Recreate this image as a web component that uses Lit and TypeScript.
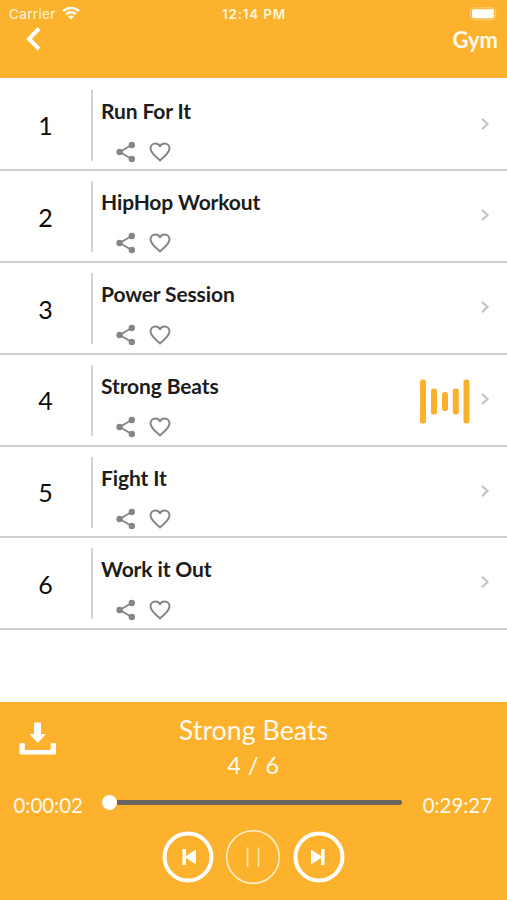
import { LitElement, html, css, svg } from "lit";
import { customElement, property, state } from "lit/decorators.js";

@customElement("track-row")
class TrackRow extends LitElement {
  @property({ type: Number }) number = 1;
  @property() name = "";
  @property({ type: Boolean }) playing = false;

  static styles = css`
    :host { display: flex; box-sizing: border-box; height: 91.7px; border-bottom: 2px solid #cfcfcf; padding-top: 10px; color: #1c1c1c; }
    .number { width: 91px; height: 71px; box-sizing: border-box; display: flex; align-items: center; justify-content: center; font-size: 25px; color: #0c0c0c; }
    .body { flex: 1; height: 71px; border-left: 2px solid #d2d2d2; box-sizing: border-box; padding-left: 8px; }
    .name { font-size: 21px; font-weight: 700; line-height: 26px; margin-top: 8px; letter-spacing: -0.12px; white-space: nowrap; }
    .actions { display: flex; gap: 12px; padding: 17px 0 0 14px; }
    .actions svg { display: block; width: 22px; height: 22px; }
    .side { display: flex; align-items: center; height: 71px; padding-right: 17px; gap: 10px; }
    .bars { width: 50px; height: 45px; margin-top: 3px; }
    .chevron { width: 10px; height: 14px; margin-top: -3px; }
  `;

  render() {
    return html`
      <div class="number">${this.number}</div>
      <div class="body">
        <div class="name">${this.name}</div>
        <div class="actions">
          <svg viewBox="0 0 22 22"><path d="M17 3.8 4.8 11 17 18.2" fill="none" stroke="#858585" stroke-width="1.8"/><g fill="#858585"><circle cx="16.8" cy="4" r="3.2"/><circle cx="4.6" cy="11" r="3.2"/><circle cx="16.8" cy="18" r="3.2"/></g></svg>
          <svg viewBox="0 0 22 22"><path d="M11 19.4C6.5 15.5 1.5 11.5 1.5 7.500C1.5 4.500 3.600 2.500 6.300 2.500C8.300 2.500 10 3.500 11 5.300C12 3.500 13.700 2.500 15.700 2.500C18.400 2.500 20.500 4.500 20.500 7.500C20.500 11.500 15.500 15.500 11 19.400Z" fill="none" stroke="#858585" stroke-width="2" stroke-linejoin="round"/></svg>
        </div>
      </div>
      <div class="side">
        ${this.playing
          ? html`<svg class="bars" viewBox="0 0 50 45"><g fill="#fbb02b"><rect x="0" y="0.500" width="6" height="44" rx="2.500"/><rect x="11" y="9.500" width="6" height="26" rx="2.500"/><rect x="22" y="13" width="6" height="19" rx="2.500"/><rect x="32.800" y="9.500" width="6" height="26" rx="2.500"/><rect x="43.500" y="0.500" width="6" height="44" rx="2.500"/></g></svg>`
          : ""}
        <svg class="chevron" viewBox="0 0 10 14"><path d="M2 1.700 7.500 7 2 12.300" fill="none" stroke="#c4c4c7" stroke-width="2.200"/></svg>
      </div>
    `;
  }
}

@customElement("app-root")
class AppRoot extends LitElement {
  @state() tracks = ["Run For It", "HipHop Workout", "Power Session", "Strong Beats", "Fight It", "Work it Out"];
  @state() current = 3;

  static styles = css`
    :host { display: flex; flex-direction: column; width: 507px; height: 900px; background: #fff; font-family: Lato, sans-serif; overflow: hidden; }
    svg { display: block; }
    .header { height: 78px; background: #fcb22c; color: #fff; flex: none; }
    .status { display: grid; grid-template-columns: 1fr auto 1fr; align-items: center; height: 27px; padding: 0 8px 0 9px; font: 400 13.5px/27px Inter, sans-serif; color: #fff6df; }
    .carrier { display: flex; align-items: center; gap: 6px; letter-spacing: 0.35px; padding-top: 1px; }
    .carrier svg { width: 18px; height: 14px; margin-top: -3px; }
    .clock { font-weight: 600; font-size: 13.5px; letter-spacing: 0.8px; padding-top: 1px; }
    .battery { justify-self: end; width: 29px; height: 14px; }
    .nav { display: flex; justify-content: space-between; padding: 0 9px 0 26px; }
    .back { width: 15px; height: 24px; }
    .heading { font-size: 22px; font-weight: 700; line-height: 26px; color: #fffaf0; }
    .list { flex: 1; padding-top: 1.800px; }
    .player { height: 198px; flex: none; background: #fcb22c; color: #fffaf0; }
    .info { display: grid; grid-template-columns: 60px 1fr 60px; height: 80px; }
    .download { width: 38px; height: 34px; margin: 20px 0 0 19px; }
    .song { text-align: center; padding-top: 11px; }
    .title { font-size: 26.800px; line-height: 34px; }
    .count { font-size: 23.500px; line-height: 34px; padding-top: 1px; letter-spacing: 0.500px; }
    .progress { display: flex; align-items: center; height: 40px; padding: 0 15px 0 13.500px; font-size: 20.400px; }
    .time { width: 70.500px; padding-top: 5px; white-space: nowrap; }
    .end { width: 70px; text-align: right; }
    .slider { flex: 1; height: 16px; margin: 0 20px 0 18px; display: flex; align-items: center; }
    .knob { width: 15px; height: 15px; border-radius: 50%; background: #fff; flex: none; }
    .rail { flex: 1; height: 5px; border-radius: 0 2px 2px 0; background: #686561; }
    .controls { display: flex; justify-content: center; align-items: center; gap: 12px; padding-top: 7px; margin-right: 1px; }
    .skip { width: 52px; height: 52px; }
    .pause { width: 55px; height: 56px; }
  `;

  render() {
    const ring = svg`<circle cx="26" cy="26" r="23.500" fill="none" stroke="#fff" stroke-width="4"/>`;
    return html`
      <div class="header">
        <div class="status">
          <div class="carrier">Carrier
            <svg viewBox="0 0 18 14"><g fill="none" stroke="#fffaf0" stroke-width="2.500"><path d="M1 5.200C5.500 0.900 12.500 0.900 17 5.200"/><path d="M4 8.400C7 5.600 11 5.600 14 8.400"/></g><path d="M6 10.500C7.700 9 10.300 9 12 10.500L9 13.500Z" fill="#fffaf0"/></svg>
          </div>
          <div class="clock">12:14 PM</div>
          <svg class="battery" viewBox="0 0 29 14"><rect x="0.500" y="0.800" width="25" height="12" rx="3.500" fill="none" stroke="#fdd17d"/><rect x="2" y="2.300" width="22" height="9" rx="2" fill="#fff"/><path d="M27 5Q28.800 6.800 27 8.600Z" fill="#fdd17d"/></svg>
        </div>
        <div class="nav">
          <svg class="back" viewBox="0 0 15 24"><path d="M13 1.500 3 12 13 22" fill="none" stroke="#fff" stroke-width="4"/></svg>
          <div class="heading">Gym</div>
        </div>
      </div>
      <div class="list">
        ${this.tracks.map((name, i) => html`<track-row .number=${i + 1} .name=${name} .playing=${i === this.current}></track-row>`)}
      </div>
      <div class="player">
        <div class="info">
          <svg class="download" viewBox="0 0 38 34"><g fill="#fff"><path d="M15 1.500Q15 0.500 16 0.500H21Q22 0.500 22 1.500V12H27L18.800 21 10.500 12H15Z"/><path d="M0.500 22Q0.500 21 1.500 21H4.800Q5.800 21 5.800 22V28H31.700V22Q31.700 21 32.700 21H36Q37 21 37 22V31Q37 32.500 35.500 32.500H2Q0.500 32.500 0.500 31Z"/></g></svg>
          <div class="song">
            <div class="title">${this.tracks[this.current]}</div>
            <div class="count">${this.current + 1} / ${this.tracks.length}</div>
          </div>
        </div>
        <div class="progress">
          <div class="time">0:00:02</div>
          <div class="slider"><div class="knob"></div><div class="rail"></div></div>
          <div class="time end">0:29:27</div>
        </div>
        <div class="controls">
          <svg class="skip" viewBox="0 0 52 52">${ring}<path d="M20.500 18H24V25L34 18.500V33.500L24 27V34H20.500Z" fill="#fff"/></svg>
          <svg class="pause" viewBox="0 0 55 56"><circle cx="27" cy="28" r="26.300" fill="none" stroke="#fff0cd" stroke-width="1.500"/><path d="M21.500 18.500V38M32.500 18.500V38" stroke="#ffe7b5" stroke-width="1.600"/></svg>
          <svg class="skip" viewBox="0 0 52 52">${ring}<path d="M18 18.500V33.500L28 27V34H31.500V18H28V25Z" fill="#fff"/></svg>
        </div>
      </div>
    `;
  }
}
